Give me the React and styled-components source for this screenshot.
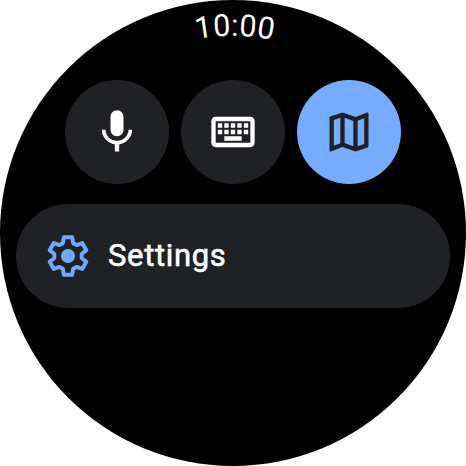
import styled, { createGlobalStyle } from 'styled-components';
import { MdMic, MdOutlineKeyboard, MdOutlineMap } from 'react-icons/md';

const GlobalStyle = createGlobalStyle`
  body {
    margin: 0;
    background: #ffffff;
    overflow: hidden;
  }
`;

const Watch = styled.div`
  width: 466px;
  height: 466px;
  border-radius: 50%;
  background: #000000;
  overflow: hidden;
  display: flex;
  flex-direction: column;
  align-items: center;
  font-family: Roboto, 'Liberation Sans', sans-serif;
`;

const ClockArea = styled.svg`
  display: block;
  width: 466px;
  height: 80px;
  flex: none;
`;

const ClockText = styled.text`
  fill: #ffffff;
  font-size: 30.5px;
  font-weight: 400;
  letter-spacing: 0.3px;
  text-anchor: middle;
`;

const Actions = styled.div`
  display: flex;
  gap: 12px;
`;

const RoundButton = styled.button`
  width: 104px;
  height: 104px;
  padding: 0;
  border: none;
  border-radius: 50%;
  display: flex;
  align-items: center;
  justify-content: center;
  font-size: 52px;
  color: ${({ $active }) => ($active ? '#202124' : '#ffffff')};
  background: ${({ $active }) => ($active ? '#76acff' : '#202124')};
`;

const Chip = styled.button`
  width: 434px;
  height: 104px;
  margin: 20px 0 0 0;
  padding: 0 0 0 28px;
  border: none;
  border-radius: 52px;
  display: flex;
  align-items: center;
  gap: 16px;
  background: #202124;
  color: #ffffff;
  font-family: inherit;
`;

const ChipLabel = styled.span`
  font-size: 31px;
  line-height: 36px;
  font-weight: 400;
  letter-spacing: 0.65px;
  -webkit-text-stroke: 0.6px #ffffff;
`;

const GearSvg = styled.svg`
  width: 48px;
  height: 48px;
  flex: none;
  overflow: visible;
  color: #71a8fc;
`;

const TOOTH = [
  [-5.2, -12.8],
  [-4.1, -18.8],
  [4.1, -18.8],
  [5.2, -12.8],
];

const gearPoints = [0, 60, 120, 180, 240, 300]
  .flatMap((deg) => {
    const a = (deg * Math.PI) / 180;
    return TOOTH.map(([x, y]) => [
      x * Math.cos(a) - y * Math.sin(a),
      x * Math.sin(a) + y * Math.cos(a),
    ]);
  })
  .map(([x, y]) => `${x.toFixed(2)},${y.toFixed(2)}`)
  .join(' ');

const GearIcon = () => (
  <GearSvg viewBox="-24 -24 48 48">
    <polygon
      points={gearPoints}
      fill="none"
      stroke="currentColor"
      strokeWidth="4"
      strokeLinejoin="round"
    />
    <circle r="7.1" fill="currentColor" />
  </GearSvg>
);

const Clock = ({ time }) => (
  <ClockArea viewBox="0 0 466 80">
    <path id="clock-arc" d="M 35.7 233 A 197.3 197.3 0 0 1 430.3 233" fill="none" />
    <ClockText>
      <textPath href="#clock-arc" startOffset="50.3%">
        {time}
      </textPath>
    </ClockText>
  </ClockArea>
);

const App = () => (
  <>
    <GlobalStyle />
    <Watch>
      <Clock time="10:00" />
      <Actions>
        <RoundButton aria-label="Voice">
          <MdMic />
        </RoundButton>
        <RoundButton aria-label="Keyboard">
          <MdOutlineKeyboard />
        </RoundButton>
        <RoundButton aria-label="Map" $active>
          <MdOutlineMap />
        </RoundButton>
      </Actions>
      <Chip>
        <GearIcon />
        <ChipLabel>Settings</ChipLabel>
      </Chip>
    </Watch>
  </>
);

export default App;
